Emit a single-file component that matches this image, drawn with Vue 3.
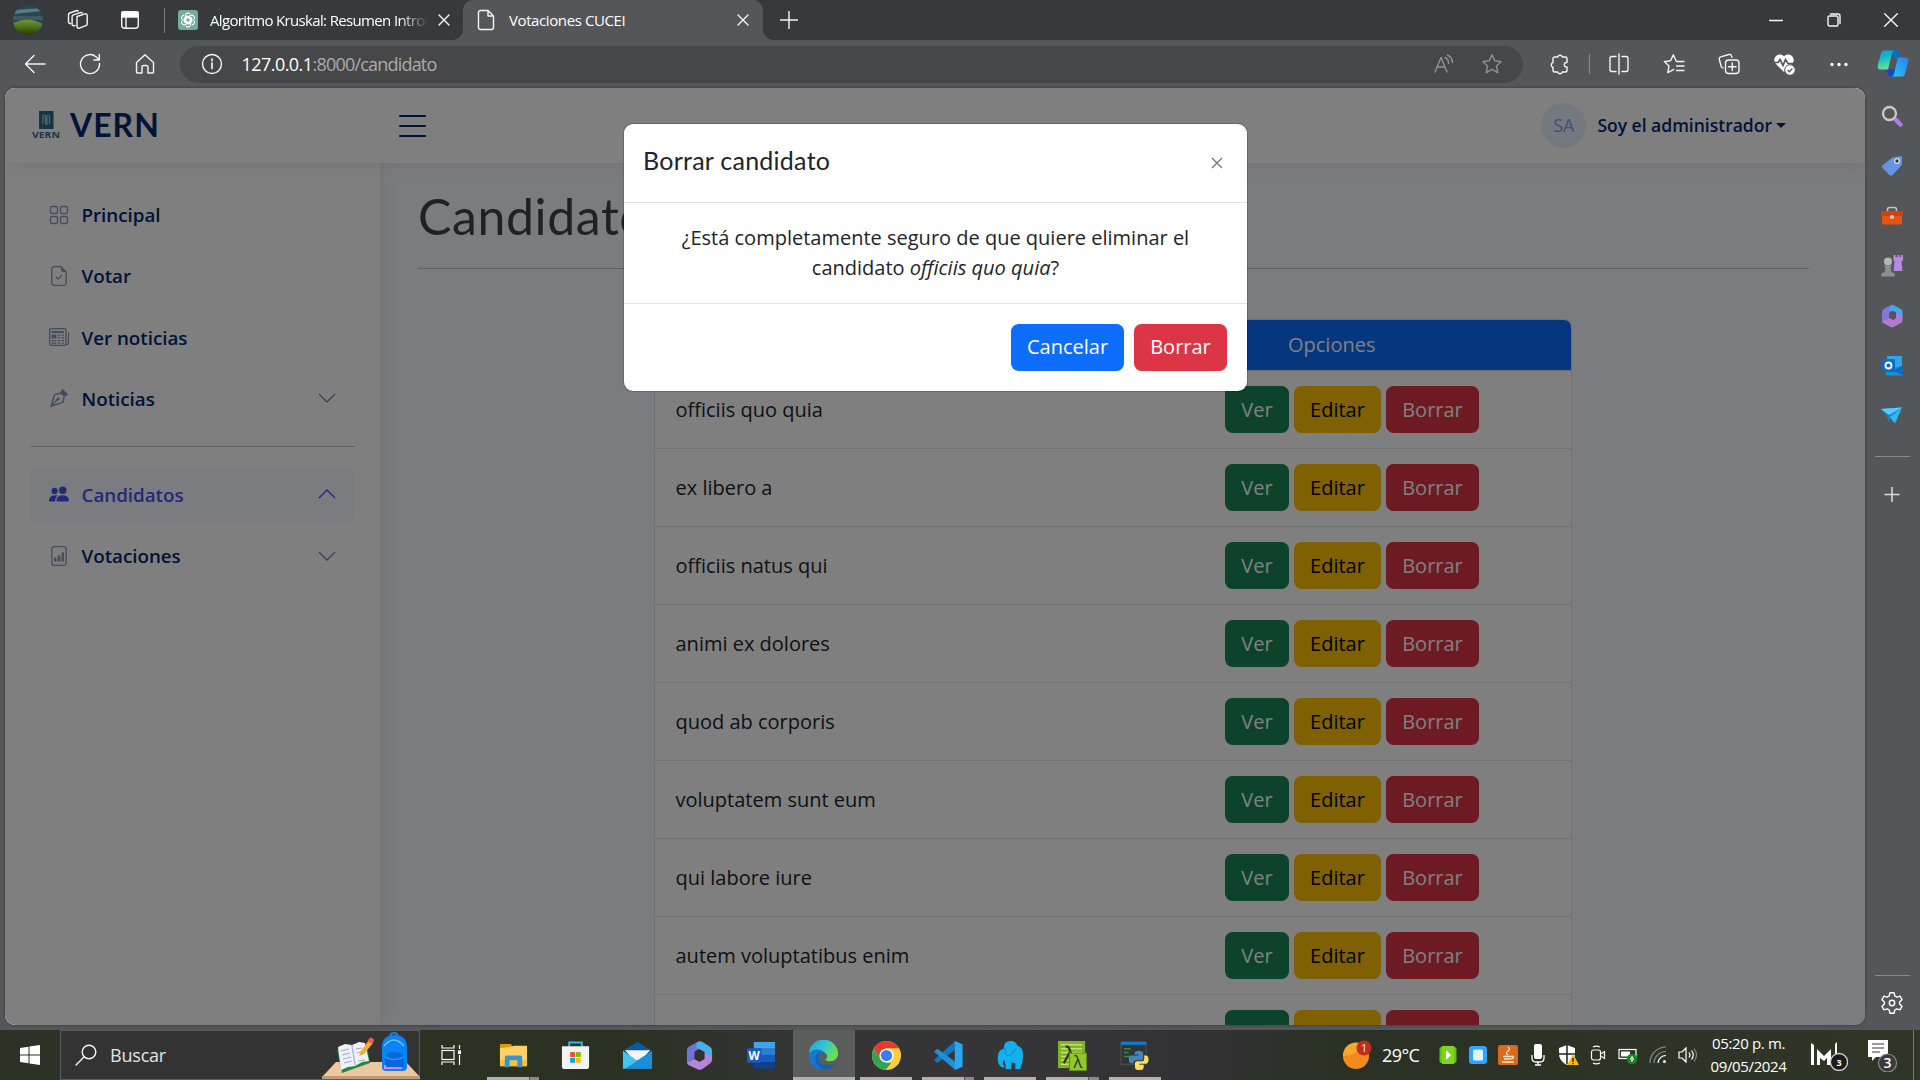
<script setup>
const rows = [
  'officiis quo quia',
  'ex libero a',
  'officiis natus qui',
  'animi ex dolores',
  'quod ab corporis',
  'voluptatem sunt eum',
  'qui labore iure',
  'autem voluptatibus enim',
  '',
]
</script>

<template>
  <div class="screen">
    <header class="tabs">
      <div class="slot avatar-slot"><svg class="avatar" width="30" height="30" viewBox="0 0 30 30">
        <defs>
          <clipPath id="avc"><circle cx="15" cy="15" r="15"/></clipPath>
          <linearGradient id="grass" x1="0" y1="0" x2="0" y2="1"><stop offset="0" stop-color="#6f9440"/><stop offset=".5" stop-color="#4c6f17"/><stop offset="1" stop-color="#25380c"/></linearGradient>
        </defs>
        <g clip-path="url(#avc)"><path d="M0 0h30v30H0z" fill="#2c4552"/><path d="M0 5l30-2v3L0 9z" fill="#587a8c"/><path d="M0 11h30v4H0z" fill="#3e5a5c"/><path d="M0 18q15-7 30 1v11H0z" fill="url(#grass)"/></g>
      </svg></div>
      <svg class="ln" style="margin-left: 24px" width="22" height="22" viewBox="0 0 22 22"><path d="M10 7.500l8-2.700a1.700 1.700 0 0 1 2.200 1.500v8.500a2 2 0 0 1-1.400 1.900l-6.400 2.400a1.700 1.700 0 0 1-2.400-1.600V9.300z"/><path d="M8 16.500l-1 .2a1.500 1.500 0 0 1-1.900-1.500V7.700a2 2 0 0 1 1.300-1.900l7.600-2.500 1.300.8M3.500 14.500a1.700 1.700 0 0 1-2-1.600V5.700A2 2 0 0 1 2.800 4l7-2.500 1.400.5"/></svg>
      <svg class="ln" style="margin-left: 31px" width="20" height="20" viewBox="0 0 20 20"><rect x="1.700" y="1.700" width="16.600" height="16.600" rx="3"/><path d="M6 7v11"/><path d="M2 2h16v5H2z" fill="#fff"/></svg>
      <i class="tab-sep"></i>
      <div class="tab first">
        <svg width="20" height="20" viewBox="0 0 20 20"><rect width="20" height="20" rx="3" fill="#74aa9c"/><g fill="none" stroke="#fff" stroke-width="1.100"><g v-for="a in 6" :key="a" :transform="`rotate(${a * 60} 10 10)`"><path d="M10 7.500L7.400 9V5.600a2.700 2.700 0 0 1 4.800-1.600M7.400 8.200l3.300-1.900 3 1.700"/></g></g></svg>
        <span class="tab-title fade">Algoritmo Kruskal: Resumen Introd</span>
        <svg class="ln x" width="12" height="12" viewBox="0 0 12 12"><path d="M1 1l10 10M11 1L1 11"/></svg>
      </div>
      <div class="tab active">
        <svg class="ln" width="18" height="22" viewBox="0 0 18 22"><path d="M3.500 1.500h7.500L16.500 7v11.500a2 2 0 0 1-2 2h-11a2 2 0 0 1-2-2v-15a2 2 0 0 1 2-2zM11 1.500V7h5.500"/></svg>
        <span class="tab-title t2">Votaciones CUCEI</span>
        <svg class="ln x" width="12" height="12" viewBox="0 0 12 12"><path d="M1 1l10 10M11 1L1 11"/></svg>
      </div>
      <svg class="ln plus" width="18" height="18" viewBox="0 0 18 18"><path d="M9 .5v17M.5 9h17"/></svg>
      <div class="win">
        <svg class="ln" width="14" height="14" viewBox="0 0 14 14"><path d="M.5 7.500h13"/></svg>
        <svg class="ln" width="14" height="14" viewBox="0 0 14 14"><rect x="1" y="3" width="10" height="10" rx="1.500"/><path d="M3.500 1h7.500a2 2 0 0 1 2 2v7.500"/></svg>
        <svg class="ln" width="14" height="14" viewBox="0 0 14 14"><path d="M.7.700l12.600 12.600M13.300.700L.7 13.300"/></svg>
      </div>
    </header>

    <div class="toolbar">
      <div class="nav">
        <svg class="ln" width="22" height="22" viewBox="0 0 22 22"><path d="M21 11H2M10 2.500L1.500 11l8.500 8.500"/></svg>
        <svg class="ln" width="22" height="22" viewBox="0 0 22 22"><path d="M20.500 10.500A9.500 9.500 0 1 1 17 3.700L20.300 7M20.300 1.500V7h-5.500"/></svg>
        <svg class="ln" width="22" height="22" viewBox="0 0 22 22"><path d="M2.500 9.500L11 1.800l8.500 7.700V19a1 1 0 0 1-1 1H14v-6a1.500 1.500 0 0 0-1.500-1.500h-3A1.500 1.500 0 0 0 8 14v6H3.500a1 1 0 0 1-1-1z"/></svg>
      </div>
      <div class="address">
        <svg class="ln" width="22" height="22" viewBox="0 0 22 22"><circle cx="11" cy="11" r="9.500"/><path d="M11 10v5.500M11 6v1.700" stroke-width="1.700"/></svg>
        <span class="url"><b>127.0.0.1</b>:8000/candidato</span>
        <svg class="ln dim" width="20" height="20" viewBox="0 0 20 20"><path d="M1 18L7 3.500 13 18M3 13h8M11 3.500a6 6 0 0 1 3.500 6M13.500 1a9 9 0 0 1 5 7.500"/></svg>
        <svg class="ln dim star" width="22" height="22" viewBox="0 0 22 22"><path d="M11 1.800l2.800 6 6.400.8-4.700 4.500 1.200 6.500L11 16.400l-5.700 3.200 1.200-6.500L1.800 8.600l6.400-.8z"/></svg>
      </div>
      <div class="tools">
        <svg class="ln" width="22" height="22" viewBox="0 0 22 22"><path d="M5.500 4h3.200a2.400 2.400 0 0 1 4.600 0h3.200a1.500 1.500 0 0 1 1.500 1.500v4h-1a2.300 2.300 0 0 0 0 4.500h1v3.500a1.500 1.500 0 0 1-1.500 1.500h-3.200a2.400 2.400 0 0 1-4.600 0H5.500A1.500 1.500 0 0 1 4 17.500v-3.200a2.400 2.400 0 0 1 0-4.600V5.500A1.500 1.500 0 0 1 5.500 4z"/></svg>
        <i class="tool-sep"></i>
        <svg class="ln" width="22" height="22" viewBox="0 0 22 22"><path d="M11 1v20M8 3.500H4a2 2 0 0 0-2 2v11a2 2 0 0 0 2 2h4M14 3.500h4a2 2 0 0 1 2 2v11a2 2 0 0 1-2 2h-4"/></svg>
        <svg class="ln" width="22" height="22" viewBox="0 0 22 22"><path d="M13 7.800l-2.700-6-2.700 6-6.300.8 4.700 4.500-1.200 6.500 6-3.200M13.500 8.500H21M13.500 13H21M13.500 17.500H21"/></svg>
        <svg class="ln" width="22" height="22" viewBox="0 0 22 22"><path d="M5 15l-1.500-.8L1.300 6.500a2 2 0 0 1 1.400-2.600L11 1.500a2 2 0 0 1 2.500 1.400l.5 1.500"/><rect x="7.500" y="7" width="13.500" height="13.500" rx="3"/><path d="M14.200 10v7.500M10.500 13.700H18"/></svg>
        <svg width="22" height="22" viewBox="0 0 22 22"><path d="M11 19L2.500 10.500a5.300 5.300 0 0 1 8.500-7 5.300 5.300 0 0 1 8.500 7z" fill="#fff"/><path d="M0 9.500h5l2-3 3 6 2.500-6 2.500 4h6" fill="none" stroke="#55565a" stroke-width="1.700"/><circle cx="17" cy="17" r="5.300" fill="#fff" stroke="#55565a"/><path d="M14.700 17l1.700 1.700 3-3.200" fill="none" stroke="#55565a" stroke-width="1.300"/></svg>
        <svg width="22" height="22" viewBox="0 0 22 22" fill="#fff"><circle cx="4" cy="11.500" r="1.700"/><circle cx="11" cy="11.500" r="1.700"/><circle cx="18" cy="11.500" r="1.700"/></svg>
      </div>
      <svg class="copilot" width="32" height="30" viewBox="0 0 32 30">
        <defs><linearGradient id="cp1" x1="0" y1="0" x2=".2" y2="1"><stop offset="0" stop-color="#0a9ee0"/><stop offset=".5" stop-color="#1fc0c5"/><stop offset="1" stop-color="#63e08e"/></linearGradient><linearGradient id="cp2" x1="0" y1="1" x2="1" y2="0"><stop offset="0" stop-color="#29c5f6"/><stop offset="1" stop-color="#2b7ff0"/></linearGradient></defs>
        <path d="M13 1.500h8l3 8h-6z" fill="#0a6fc8"/><path d="M8 20h8l5-1-4 8.500h-3c-3 0-3-4-6-7.500z" fill="#1844c9"/>
        <path d="M7 1.500h11c-3 0-3 3-4 7l-3 12H4c-3 0-4-2-3-5L4 4.500c.5-2 1.500-3 3-3z" fill="url(#cp1)"/><path d="M25 27.500H14c3 0 3-3 4-7l3-12h7c3 0 4 2 3 5l-3 11c-.5 2-1.500 3-3 3z" fill="url(#cp2)"/>
      </svg>
    </div>

    <div class="middle">
      <div class="page">
        <div class="page-head">
          <svg width="30" height="30" viewBox="0 0 30 30" class="brand-img"><rect x="7" y="1" width="14.500" height="18" fill="#2f6b88"/><path d="M11 14V6.500q0-1.500 1.300-1.500 1.200 0 1.200 1.500v6.500q0 1.500 1.500 1.500V6.500Q15 5 16.500 5q1 0 1 1.500V14" fill="none" stroke="#b9cbd4" stroke-width="1.200"/><text x="0" y="27.500" textLength="28" lengthAdjust="spacingAndGlyphs" font-size="9" font-weight="700" fill="#3a6b85">VERN</text></svg>
          <span class="brand">VERN</span>
          <div class="burger"><i></i><i></i><i></i></div>
          <div class="user"><span class="initials">SA</span><b>Soy el administrador</b><i class="caret"></i></div>
        </div>
        <div class="page-body">
          <nav class="side">
            <a><svg class="g" viewBox="0 0 20 20"><g fill="none" stroke="currentColor" stroke-width="1.300"><rect x="1.500" y="1.500" width="7" height="7" rx="1.500"/><rect x="11.500" y="1.500" width="7" height="7" rx="1.500"/><rect x="1.500" y="11.500" width="7" height="7" rx="1.500"/><rect x="11.500" y="11.500" width="7" height="7" rx="1.500"/></g></svg><span>Principal</span></a>
            <a><svg class="g" viewBox="0 0 20 20"><path d="M12 .7H5a2.200 2.200 0 0 0-2.200 2.200v14.200A2.200 2.200 0 0 0 5 19.300h10a2.200 2.200 0 0 0 2.200-2.200V5.900zM7 11l2 2 4-4" fill="none" stroke="currentColor" stroke-width="1.300"/><path d="M12 .5V4a2 2 0 0 0 2 2h3.500z" fill="currentColor"/></svg><span>Votar</span></a>
            <a><svg class="g" viewBox="0 0 20 20"><path d="M2 1.700h14a1 1 0 0 1 1 1v14a1.500 1.500 0 0 0 2.500 0V5.500M17 17.500a1.500 1.500 0 0 1-1 .8H2.200a1.500 1.500 0 0 1-1.500-1.500V3a1.300 1.300 0 0 1 1.300-1.300" fill="none" stroke="currentColor" stroke-width="1.300"/><path d="M2.500 4h12.500v2H2.500zM2.500 7.500h5v4h-5zM8.800 7.500h2.500v1.300H8.800zM12.500 7.500H15v1.300h-2.500zM8.800 10.200h2.500v1.300H8.800zM12.500 10.200H15v1.300h-2.500zM2.500 13h5v1.200h-5zM8.800 13h2.500v1.200H8.800zM12.500 13H15v1.200h-2.500zM2.500 15.500h5v1.200h-5zM8.800 15.500h2.500v1.200H8.800zM12.500 15.500H15v1.200h-2.500z" fill="currentColor"/></svg><span>Ver noticias</span></a>
            <a><svg class="g" viewBox="0 0 20 20"><path d="M12 5l3.300 3.300-1.600 6.200L2 18.200 5.700 6.600zM2 18l6.500-6.500" fill="none" stroke="currentColor" stroke-width="1.400"/><circle cx="9" cy="11" r="1.500" fill="currentColor"/><path d="M13.500.8l5.800 5.700-3.500 2.200-4.500-4.500z" fill="currentColor"/></svg><span>Noticias</span><svg class="chev" viewBox="0 0 18 10"><path d="M1 1l8 8 8-8"/></svg></a>
            <hr />
            <a class="on"><svg class="g" viewBox="0 0 16 16"><path fill="currentColor" d="M7 14s-1 0-1-1 1-4 5-4 5 3 5 4-1 1-1 1H7Zm4-6a3 3 0 1 0 0-6 3 3 0 0 0 0 6Zm-5.784 6A2.238 2.238 0 0 1 5 13c0-1.355.68-2.750 1.936-3.720A6.325 6.325 0 0 0 5 9c-4 0-5 3-5 4s1 1 1 1h4.216ZM4.500 8a2.500 2.500 0 1 0 0-5 2.500 2.500 0 0 0 0 5Z"/></svg><span>Candidatos</span><svg class="chev" viewBox="0 0 18 10"><path d="M1 9l8-8 8 8"/></svg></a>
            <a><svg class="g" viewBox="0 0 20 20"><rect x="2.800" y=".7" width="14.400" height="18.600" rx="2.200" fill="none" stroke="currentColor" stroke-width="1.300"/><path d="M5 11.500h2.500v4H5zM8.700 9.500h2.600v6H8.700zM12.500 6.500H15v9h-2.500z" fill="currentColor"/></svg><span>Votaciones</span><svg class="chev" viewBox="0 0 18 10"><path d="M1 1l8 8 8-8"/></svg></a>
          </nav>
          <main>
            <h1>Candidatos</h1>
            <div class="list">
              <div class="list-head"><span></span><span class="opt">Opciones</span></div>
              <div v-for="(r, i) in rows" :key="i" class="list-row">
                <span>{{ r }}</span>
                <div class="actions"><button class="ver">Ver</button><button class="editar">Editar</button><button class="borrar">Borrar</button></div>
              </div>
            </div>
          </main>
        </div>
        <div class="backdrop">
          <div class="modal">
            <div class="m-head"><h5>Borrar candidato</h5><svg width="12" height="12" viewBox="0 0 12 12"><path d="M1 1l10 10M11 1L1 11" stroke="#808080" stroke-width="1.500"/></svg></div>
            <p>¿Está completamente seguro de que quiere eliminar el candidato <em>officiis quo quia</em>?</p>
            <div class="m-foot"><button class="cancelar">Cancelar</button><button class="borrar">Borrar</button></div>
          </div>
        </div>
      </div>

      <aside class="rail">
        <svg viewBox="0 0 24 24"><path d="M16 16l4.500 4.500" stroke="#b37be8" stroke-width="4.500" stroke-linecap="round"/><circle cx="9.500" cy="9.500" r="6.500" fill="none" stroke="#c9c9c9" stroke-width="2.300"/></svg>
        <svg viewBox="0 0 24 24"><path d="M12.500 3.500l8-1.500q1.500 0 1.500 1.500v7.500L12.500 21q-1.500 1.300-3 0L2.500 14q-1-1.300 0-2.700z" fill="#6394e6"/><circle cx="17" cy="7" r="2.300" fill="#333" stroke="#e0e0e0" stroke-width="1.300"/></svg>
        <svg viewBox="0 0 24 24"><path d="M7.500 7V5.500q0-2 2-2h5q2 0 2 2V7" fill="none" stroke="#c4c4c4" stroke-width="1.600"/><rect x="2" y="10" width="20" height="10.500" rx="1.500" fill="#e85410"/><rect x="1" y="7" width="22" height="5" rx="1" fill="#cd4312"/><circle cx="12" cy="13" r="2.100" fill="#c9c9c9"/></svg>
        <svg viewBox="0 0 24 24"><path d="M13.500 1h2v2h2V1h2v2h1.500V1h2v5l-1.500 2 1 9h-9l1-9-1-2z" fill="#b58ae6"/><circle cx="8" cy="7.500" r="4" fill="#b5b5b5"/><path d="M3.500 11.500h9l-2 2 1 5.500h-7l1-5.500zM1 22.500q0-4 3-4h8q3 0 3 4z" fill="#8d8f91"/></svg>
        <svg viewBox="0 0 24 24"><path d="M11 1L3.500 5Q2 6 2 8v9l7-3.500V9l6-4z" fill="#7d78dd"/><path d="M11 1q1-.5 2 0l8 4q1.500 1 1.500 2.500V13L16 9.500V8L9 6z" fill="#43a6ef"/><path d="M22.500 12v4.500q0 1.500-1.500 2.500l-7.500 4q-1.500.5-3 0L3 19q-1-.8-1-2l7-3.500 4 2.500 3-2V9.500z" fill="#b07ad0"/><path d="M9 9l4-2 3 2v5l-3 2-4-2.500z" fill="#55565a"/></svg>
        <svg viewBox="0 0 24 24"><rect x="7" y="2" width="15" height="15" fill="#29a8ea"/><path d="M6 13h17v8.500H6z" fill="#1490df"/><path d="M13 17l10-6v10z" fill="#1668b3"/><rect x="2" y="5" width="13" height="13" rx="1.500" fill="#0f6cbd"/><circle cx="8.500" cy="11.500" r="3" fill="none" stroke="#fff" stroke-width="1.800"/></svg>
        <svg viewBox="0 0 24 24"><path d="M1 5l21-1.500-7 16-5-6z" fill="#30b7f2"/><path d="M22 3.500L10 13l-1 5-3-7.500L1 5z" fill="#1782cf"/><path d="M22 3.500L9 11 1 5z" fill="#5dcaf8"/></svg>
        <i></i>
        <svg viewBox="0 0 24 24"><path d="M12 4v15M4.500 11.500h15" stroke="#d8d8d8" stroke-width="1.600"/></svg>
        <i class="low"></i>
        <svg class="gear" viewBox="0 0 24 24" fill="none" stroke="#fff" stroke-width="1.400"><circle cx="12" cy="12" r="2.700"/><path d="M10 1.700h4l.8 3.300 2 1.200 3.200-1 2 3.500-2.400 2.300v2L22 15.300l-2 3.500-3.200-1-2 1.200-.8 3.300h-4L9.200 19l-2-1.200-3.200 1-2-3.500L4.400 13v-2L2 8.700l2-3.500 3.200 1L9.200 5z" stroke-linejoin="round"/></svg>
      </aside>
    </div>

    <footer class="taskbar">
      <div class="start"><svg width="20" height="20" viewBox="0 0 20 20" fill="#fff"><path d="M0 3l8.500-1.200v7.700H0zM9.500 1.600L20 0v9.500H9.500zM0 10.500h8.500v7.700L0 17zM9.500 10.500H20V20L9.500 18.400z"/></svg></div>
      <div class="search">
        <svg class="ln" width="22" height="22" viewBox="0 0 22 22"><circle cx="14" cy="8" r="6.800"/><path d="M9 13l-8 8"/></svg><span>Buscar</span>
        <svg class="desk" width="98" height="48" viewBox="0 0 98 48">
          <path d="M14 31h70l14 15v2H0v-2z" fill="#ecc7a0"/><path d="M0 45h98v3H0z" fill="#c39a72"/>
          <path d="M15 19l3-2 27-3 3 18-28 10z" fill="#218a44"/><path d="M16 16l7-3 7 1 7-3 6 1 4 18-7 1-7 4-7 1-7 3z" fill="#eef0fa"/><path d="M30 14l3 20" stroke="#b9b4d2" stroke-width="1.500"/><path d="M19 20l8-2M20 24l8-2M21 28l8-2M22 32l8-2M34 18l6-1M35 22l4-1M36 30l7-1" stroke="#a9a5c4" stroke-width="1" fill="none"/>
          <path d="M37 25l2-5 8-11 4 3-9 11z" fill="#fbac2c"/><path d="M45.500 10l2.500-3.500q4 0 4 3.500l-2 3z" fill="#e85b50"/>
          <path d="M68 6q0-4 4-4t4 4" fill="none" stroke="#1c7fd7" stroke-width="2"/><path d="M60 15q1-11 12.500-11T85 15v21q0 4-4 4H64q-4 0-4-4z" fill="#0c83f5"/><path d="M62 15q10-12 20 0" stroke="#64c7ff" fill="none" stroke-width="1.500"/><path d="M63 27q1-6 9.500-6t9.500 6v9H63z" fill="#0767df"/><path d="M63 26q9 5 19 0" stroke="#29b8ff" fill="none"/><path d="M63 34v3h17" stroke="#d28cff" fill="none" stroke-width="2"/>
        </svg>
      </div>
      <div class="apps">
        <div class="app"><svg width="20" height="20" viewBox="0 0 20 20" fill="none" stroke="#fff" stroke-width="1.200"><path d="M1 0v3h12V0M1 20v-3h12v3M18.500 0v4M18.500 10v10"/><rect x="1" y="5.500" width="12" height="9"/><rect x="17.500" y="6" width="2" height="2.500" fill="#fff"/></svg></div>
        <div class="app run split"><svg viewBox="0 0 32 32"><path d="M2 5q0-1 1-1h10l3 4H2z" fill="#dc9b00"/><path d="M2 8l12-1 2-1h14v20q0 1-1 1H3q-1 0-1-1z" fill="#fdd265"/><path d="M2 21h28v6H2z" fill="#f8c235"/><path d="M7 28V18q0-2 2-2h14q2 0 2 2v10h-5v-7h-8v7z" fill="#3c91d3"/></svg></div>
        <div class="app"><svg viewBox="0 0 32 32"><path d="M9.500 7V2.500h13V7" fill="none" stroke="#32b4ec" stroke-width="2"/><path d="M2 6.500h28V27q0 3-3 3H5q-3 0-3-3z" fill="#f3f3f3"/><path d="M10.500 12.500h5v5h-5z" fill="#f25022"/><path d="M16.500 12.500h5v5h-5z" fill="#7fba00"/><path d="M10.500 18.500h5v5h-5z" fill="#00a4ef"/><path d="M16.500 18.500h5v5h-5z" fill="#ffb900"/></svg></div>
        <div class="app"><svg viewBox="0 0 32 32"><path d="M1 11L16 2l15 9z" fill="#0b59a4"/><path d="M3 10.500h26L20 21h-8z" fill="#f3f5f7"/><path d="M1 11l15 11 15-11v18.500H1z" fill="#38baf0"/><path d="M31 11v18.500H3L16 21z" fill="#198fdb"/><path d="M1 11v18.500h2L22 17.500 16 22z" fill="#41c3f3"/></svg></div>
        <div class="app"><svg viewBox="0 0 32 32"><path d="M15 1.500L5.500 6.500Q3 8 3 11v12l8-3.500V12l8-5z" fill="#6f74d0"/><path d="M15 1.500q2-.8 4 .5l7 4.500q3 1.500 3 4.500v7l-8-5.500V12l-8-4V3z" fill="#48b0ec"/><path d="M29 17v3q0 3-2.500 4.500L19 30q-2.500 1.500-5 .3L5 26q-2-1-2-3l8-3.500 5 3 5-3v-7z" fill="#b585dc"/><path d="M11 12l4-2 6 2.500v7l-5 3-5-3z" fill="#30322f"/></svg></div>
        <div class="app"><svg viewBox="0 0 32 32"><path d="M8 2h22v7H8z" fill="#41a5ee"/><path d="M8 9h22v7H8z" fill="#2b7cd3"/><path d="M8 16h22v7H8z" fill="#185abd"/><path d="M8 23h22v6.500H8z" fill="#103f91"/><rect x="1" y="8.500" width="15" height="15" rx="1" fill="#1b5ac0"/><text x="8.500" y="20.500" text-anchor="middle" font-size="12" font-weight="700" fill="#fff">W</text></svg></div>
        <div class="app run sel"><svg viewBox="0 0 32 32"><defs><linearGradient id="eg" x1="0" y1="0" x2="1" y2=".5"><stop offset="0" stop-color="#239be0"/><stop offset=".55" stop-color="#35c6d0"/><stop offset="1" stop-color="#6be04b"/></linearGradient></defs><path d="M1 15a15 15 0 0 1 30-1c0 5-4 8-8 8-3 0-5-1-5-2 2-1 2-3 1.500-4.500C18 12 12 10 8 11c-4 1-7 4-7 4z" fill="url(#eg)"/><path d="M1 15c2-6 12-7 16-2-3 0-6 3-5 8 1 6 8 8 16 4-3 4-8 6-12 6A15 15 0 0 1 1 15z" fill="#1479cf"/><path d="M12 12c-7 4-6 15 5 19 5 0 9-3 12-7-9 5-19 2-18-7 0-2 1-4 2-5z" fill="#0e58a8" opacity=".7"/></svg></div>
        <div class="app run"><svg viewBox="0 0 32 32"><circle cx="16" cy="16" r="15" fill="#ffcd40"/><path d="M3 8.500A15 15 0 0 1 29 8.500H16L9.500 20z" fill="#e33b2e"/><path d="M3 8.500L9.500 20 16 23.500h5L15 31A15 15 0 0 1 3 8.500z" fill="#32a350"/><circle cx="16" cy="16" r="7.300" fill="#fff"/><circle cx="16" cy="16" r="5.800" fill="#3b7ded"/></svg></div>
        <div class="app run split"><svg viewBox="0 0 32 32"><path d="M23 1l-19 18-2.500-1.500v-3L4 13l19 17z" fill="none"/><path d="M23 1v9L4.500 23.500 1.500 21v-1z" fill="#1277bd"/><path d="M4.500 9L1.500 11.500v1L23 31v-8.500z" fill="#1e8fd8"/><path d="M22.500 1l8 3.500v23l-8 3.500z" fill="#2aa7f0"/></svg></div>
        <div class="app run"><svg viewBox="0 0 32 32"><path d="M9 9q0-8 7-8 6 0 7 5 6 1 6 10 0 7-3 14h-5v-6l-4-1v7h-6q0-7-2-10l-1 3q0 3 2 4-1 2-3 1-5-3-4-10Q3 10 9 9z" fill="#13b0ee"/><path d="M11 8q-2 7 2 8t5-4q3 1 4-4" fill="none" stroke="#0789bd"/></svg></div>
        <div class="app run split"><svg viewBox="0 0 32 32"><path d="M1 1h28v28H1z" fill="#80b51f"/><path d="M4 5h22M4 9h22M4 13h22M4 17h10M4 21h10M4 25h8" stroke="#c2df7b" stroke-width="1.500"/><path d="M9 7q3-1 4 3l4 12M13 13L7 24" stroke="#2d4005" stroke-width="2.500" fill="none"/><rect x="13" y="13.500" width="17.500" height="18" fill="#93c62b" stroke="#638d0e"/><text x="21.500" y="28.500" text-anchor="middle" font-size="17" fill="#26370b">λ</text></svg></div>
        <div class="app run"><svg viewBox="0 0 32 32"><path d="M2 2h26v23H2z" fill="#2f3437" stroke="#555"/><path d="M2 2h26v3H2z" fill="#1379ce"/><path d="M5 9h7M5 13h5M5 17h7" stroke="#3f8549" stroke-width="1.500"/><path d="M16 14q0-3 4.500-3t4.500 3v5q0 2-2 2h-5q-3 0-3 3h-2q-3 0-3-4t3-4h7v-1h-4z" fill="#4584b6"/><path d="M26 16h1.500q3 0 3 4t-3 4.500H21v1h4.500V28q0 3-4.500 3t-4.500-3v-4q0-2 2-2h5q2.500 0 2.500-3z" fill="#ffde57"/></svg></div>
      </div>
      <div class="tray">
        <div class="t"><svg width="30" height="32" viewBox="0 0 30 32"><circle cx="14" cy="17" r="13" fill="#f28a1d"/><path d="M1 17A13 13 0 0 1 20 5Q15 17 1 17" fill="#f5a92c"/><circle cx="22" cy="9" r="7.500" fill="#c42b1c"/><text x="22" y="13" text-anchor="middle" font-size="10" fill="#fff">1</text></svg></div>
        <span class="temp">29°C</span>
        <div class="t"><svg width="18" height="20" viewBox="0 0 18 20"><rect x=".5" y="2" width="17" height="16" rx="2" fill="#61c414"/><path d="M3 1h12v18H3z" fill="#7bd51b"/><path d="M7 5l5 5-5 5z" fill="#fff"/></svg></div>
        <div class="t"><svg width="18" height="20" viewBox="0 0 18 20"><rect y="1" width="18" height="18" rx="3" fill="#2fa3ff"/><rect x="4" y="4.500" width="10" height="11" rx="1.500" fill="#dff3ff"/></svg></div>
        <div class="t"><svg width="20" height="20" viewBox="0 0 20 20"><rect width="20" height="20" rx="2" fill="#d96a1c"/><path d="M10 2q3 2 0 4t0 4M5 11.500h8.500q3-1 1 2l-2 .5M6 14h6M4 17h12" fill="none" stroke="#ffe6cd" stroke-width="1.400"/></svg></div>
        <div class="t"><svg width="14" height="22" viewBox="0 0 14 22"><rect x="3" width="8" height="15" rx="2" fill="#fff"/><path d="M1 11v3q0 4 4 4h4q4 0 4-4v-3M7 18v3M4 21h6" fill="none" stroke="#fff" stroke-width="1.300"/></svg></div>
        <div class="t"><svg width="22" height="22" viewBox="0 0 22 22"><path d="M10 1l8 3v6q0 7-8 11-8-4-8-11V4z" fill="#fff"/><path d="M10 1v19M2 10h16" stroke="#222" stroke-width="1.500"/><path d="M16 10l6 11H10z" fill="#fcb816"/><path d="M16 14v4M16 19v1.300" stroke="#222" stroke-width="1.400"/></svg></div>
        <div class="t"><svg width="16" height="20" viewBox="0 0 16 20" fill="none" stroke="#fff" stroke-width="1.200"><rect x="1.500" y="5" width="9" height="10" rx="2"/><path d="M10.500 9l4-2.500v7L10.500 11M3 2q3-1.700 7 0M3 18q3 1.700 7 0"/></svg></div>
        <div class="t"><svg width="20" height="20" viewBox="0 0 20 20"><rect x="1" y="4.500" width="17" height="9" fill="none" stroke="#fff" stroke-width="1.200"/><path d="M3 6.500h9v5H3z" fill="#fff"/><circle cx="14" cy="14" r="5.300" fill="#118a23"/><path d="M14 11v6M12.300 14l1.700-2 1.700 2-1.700 1.700z" stroke="#fff" fill="none"/></svg></div>
        <div class="t"><svg width="18" height="18" viewBox="0 0 18 18" fill="none" stroke="#8a8f86" stroke-width="1.200"><path d="M1 17A16 16 0 0 1 17 1M5 17A12 12 0 0 1 17 5.500" /><path d="M9 17a8 8 0 0 1 8-7.500" stroke="#fff"/><circle cx="15.500" cy="15.500" r="1.500" fill="#fff" stroke="none"/></svg></div>
        <div class="t"><svg width="20" height="18" viewBox="0 0 20 18" fill="none" stroke="#fff" stroke-width="1.200"><path d="M1 6h3l4-4v14l-4-4H1zM11 6.500q2 2.500 0 5M13.500 4.500q3.500 4.500 0 9"/><path d="M16 2.500q5 6.500 0 13" stroke="#888"/></svg></div>
        <div class="clock"><span>05:20 p. m.</span><span>09/05/2024</span></div>
        <div class="t mm"><svg width="38" height="32" viewBox="0 0 38 32"><path d="M1 4l3 2v20H1zM7 26V10l7 7 7-7v16h-4v-7l-3 3-4-3v7zM25 5l2-2v14h-2z" fill="#fff"/><circle cx="29" cy="23" r="8.500" fill="#1a1a1a" stroke="#ccc" stroke-width="1.300"/><text x="29" y="26.500" text-anchor="middle" font-size="9" font-weight="700" fill="#fff">3</text></svg></div>
        <div class="t nn"><svg width="32" height="34" viewBox="0 0 32 34"><path d="M1 2h20v17H9l-4 4v-4H1z" fill="#fff"/><path d="M5 6h12M5 10h12M5 14h8" stroke="#333" stroke-width="1.200"/><circle cx="20.500" cy="25" r="9" fill="#3a3a3a" stroke="#8a8a8a" stroke-width="1.200"/><text x="20.500" y="30" text-anchor="middle" font-size="14" font-weight="600" fill="#fff">3</text></svg></div>
      </div>
    </footer>
  </div>
</template>

<style>
html, body { margin: 0; overflow: hidden; }
</style>

<style scoped>
* { box-sizing: border-box; }
.screen { width: 1920px; height: 1080px; background: #55565a; font-family: "Open Sans", "Noto Sans", sans-serif; overflow: hidden; }
svg { display: block; flex: none; }
.ln { fill: none; stroke: #f5f5f5; stroke-width: 1.4; stroke-linecap: round; stroke-linejoin: round; }

.tabs { height: 40px; background: #38393c; display: flex; align-items: center; }
.avatar-slot { padding-left: 13px; }
.tab-sep { width: 1px; height: 25px; background: #77787b; margin: 0 0 0 24px; }
.tab { display: flex; align-items: center; height: 40px; }
.tab.first { width: 298px; padding-left: 13px; }
.tab-title { font-size: 15px; color: #fff; white-space: nowrap; overflow: hidden; line-height: 40px; margin-top: -1px; }
.fade { width: 218px; margin-left: 12px; letter-spacing: -0.65px; -webkit-mask-image: linear-gradient(90deg, #000 87%, transparent 100%); mask-image: linear-gradient(90deg, #000 87%, transparent 100%); }
.first .x { margin-left: 10px; }
.tab.active { width: 300px; background: #55565a; border-radius: 10px 10px 0 0; padding: 0 14px 0 14px; position: relative; }
.active::before, .active::after { content: ""; position: absolute; bottom: 0; width: 10px; height: 10px; }
.active::before { left: -10px; background: radial-gradient(circle at 0 0, #38393c 9.5px, #55565a 10px); }
.active::after { right: -10px; background: radial-gradient(circle at 100% 0, #38393c 9.5px, #55565a 10px); }
.t2 { margin-left: 14px; flex: 1; letter-spacing: -0.4px; }
.plus { margin-left: 17px; }
.win { margin-left: auto; display: flex; gap: 43.5px; padding-right: 22px; }

.toolbar { height: 48px; display: flex; align-items: center; }
.nav { display: flex; gap: 33px; padding-left: 24px; width: 180px; }
.address { width: 1343px; height: 37px; border-radius: 19px; background: #464749; display: flex; align-items: center; padding-left: 21px; }
.url { flex: 1; margin-left: 18.5px; margin-top: -1px; font-size: 18px; color: #aaabad; letter-spacing: -0.8px; }
.url b { font-weight: 400; color: #fff; letter-spacing: -.55px; }
.address .dim { stroke: #919294; }
.address .star { margin: 0 20px 0 27px; }
.tools { display: flex; align-items: center; padding-left: 26px; gap: 33px; }
.tool-sep { width: 1px; height: 20px; background: #8a8b8e; margin: 0 -15px 0 -15px; }
.copilot { margin-left: 27px; }

.middle { height: 942px; display: flex; padding-left: 5px; }
.page { width: 1860px; height: 937px; border-radius: 10px; overflow: hidden; position: relative; background: #f6f9ff; box-shadow: 0 0 3px rgba(0, 0, 0, .4); }
.page-head { height: 75px; background: #fff; display: flex; align-items: center; position: relative; z-index: 1; box-shadow: 0 2px 20px rgba(1, 41, 112, .1); }
.brand-img { margin-left: 27px; margin-top: -2px; }
.brand { font-size: 32px; color: #012970; width: 337px; padding-left: 8px; margin-top: -3px; font-family: Lato, sans-serif; font-weight: 700; letter-spacing: 1px; }
.burger { width: 27px; height: 22px; display: flex; flex-direction: column; justify-content: space-between; }
.burger i { height: 2px; background: #012970; border-radius: 1px; }
.user { margin-left: auto; margin-right: 79px; margin-top: -1px; display: flex; align-items: center; color: #012970; font-size: 17.5px; }
.user b { font-weight: 600; margin-left: 11px; margin-top: -1px; }
.initials { width: 45px; height: 45px; border-radius: 50%; background: #e7f3fc; color: #7f9cf5; display: grid; place-items: center; font-size: 18px; }
.caret { border: 5px solid transparent; border-top-color: #012970; border-bottom: 0; margin-left: 4px; }
.page-body { display: flex; height: 862px; }
.side { width: 375px; background: #fff; padding: 24px 25px; box-shadow: 0 0 20px rgba(1, 41, 112, .1); }
.side a { height: 55px; margin-bottom: 6.25px; display: flex; align-items: center; padding: 0 19px; border-radius: 5px; color: #012970; font-size: 18.75px; font-weight: 600; }
.side a span { margin-left: 12.5px; flex: 1; }
.g { width: 20px; height: 20px; color: #899bbd; }
.chev { width: 18px; height: 10px; fill: none; stroke: #7084ab; stroke-width: 1.3; }
.side hr { border: 0; height: 1px; background: #c8c8c8; margin: 20px 0 20px; }
.side a.on { background: #f6f9ff; color: #4154f1; }
.on .g, .on .chev { color: #4154f1; stroke: #4154f1; }
.on .g { stroke: none; }
main { flex: 1; padding: 23px 56px 0 38px; }
h1 { margin: 0; height: 83px; border-bottom: 1px solid #bfc3cb; font: 400 50px/60px Lato, sans-serif; letter-spacing: .6px; color: #404347; }
.list { width: 918px; margin: 50px 0 0 236px; border: 1px solid #dee2e6; border-radius: 8px 8px 0 0; overflow: hidden; background: #fff; font-size: 20px; line-height: 30px; color: #212529; }
.list-head { height: 51px; border-bottom: 1px solid #dee2e6; background: #0d6efd; color: #fff; padding: 10px 20px; display: flex; justify-content: space-between; }
.opt { width: 263px; }
.list-row { height: 78px; border-bottom: 1px solid #dee2e6; padding: 0 20px 0 20.5px; display: flex; align-items: center; justify-content: space-between; }
.actions { width: 326px; display: flex; gap: 5px; }
button { height: 47px; border: 0; border-radius: 7.5px; padding: 0; font: 400 20px/30px "Open Sans", sans-serif; color: #fff; }
.ver { width: 64px; background: #198754; }
.editar { width: 87px; background: #ffc107; color: #000; }
.borrar { width: 93px; background: #dc3545; }
.cancelar { width: 113px; background: #0d6efd; }
.backdrop { position: absolute; inset: 0; z-index: 2; background: rgba(0, 0, 0, .5); padding: 35px 0 0 618px; }
.modal { width: 625px; height: 269px; background: #fff; background-clip: padding-box; border: 1px solid rgba(0, 0, 0, .176); border-radius: 10px; color: #212529; }
.m-head { height: 79px; border-bottom: 1px solid #dee2e6; display: flex; align-items: center; justify-content: space-between; padding: 0 24px 0 19px; }
h5 { margin: 0 0 5px; font: 400 25px/37px Lato, sans-serif; letter-spacing: .25px; }
.modal p { margin: 0; height: 101px; padding: 20px; border-bottom: 1px solid #dee2e6; text-align: center; font-size: 20px; line-height: 30px; }
.m-foot { display: flex; justify-content: flex-end; gap: 10px; padding: 20px; }
.m-foot button { padding-bottom: 1.5px; }

.rail { width: 55px; display: flex; flex-direction: column; align-items: center; padding: 16px 1px 0 0; height: 942px; }
.rail svg { width: 24px; height: 24px; margin-bottom: 26px; fill: none; }
.rail i { width: 35px; height: 1px; background: #88898c; margin: 2px 0 26px; flex: none; }
.rail i.low { margin: auto 0 15px; }
.rail .gear { margin-bottom: 15px; }

.taskbar { height: 50px; display: flex; align-items: center; background: linear-gradient(90deg, #2c3226 0, #2b3122 620px, #333434 790px, #363638 1000px, #323234 1200px, #2b3025 1330px, #2f3628 1920px); color: #fff; }
.start { width: 60px; display: grid; place-items: center; }
.search { width: 360px; height: 50px; background: #333; border: 1px solid #5a5b5a; display: flex; align-items: center; padding-left: 14px; font-size: 18px; color: #e4e4e4; letter-spacing: -.2px; }
.search span { margin-left: 13px; flex: 1; }
.desk { margin-right: -1px; }
.apps { display: flex; height: 50px; }
.app { width: 62.15px; display: grid; place-items: center; position: relative; }
.app svg { width: 31px; height: 31px; }
.app:first-child { margin-left: -1px; width: 63.2px; }
.app:first-child svg { width: 20px; height: 20px; }
.sel { background: #5b5c5c; }
.run::after { content: ""; position: absolute; left: 5px; right: 5px; bottom: 0; height: 3px; background: #b5b0b0; }
.sel::after { left: 0; right: 0; }
.split::after { background: linear-gradient(90deg, #b5b0b0 80%, #555 80%, #555 82%, #8b878a 82%); }
.tray { margin-left: auto; display: flex; align-items: center; height: 50px; padding-right: 6px; }
.t { width: 30px; display: grid; place-items: center; }
.temp { font-size: 18px; width: 61px; padding-left: 10px; letter-spacing: -.6px; }
.clock { width: 91px; display: flex; flex-direction: column; align-items: center; font-size: 15px; line-height: 23px; letter-spacing: -.35px; margin-right: 6px; white-space: nowrap; }
.mm { width: 58px; }
.nn { width: 50px; margin-right: 5px; }
.tray::after { content: ""; width: 1px; height: 50px; background: #777b74; }
</style>
